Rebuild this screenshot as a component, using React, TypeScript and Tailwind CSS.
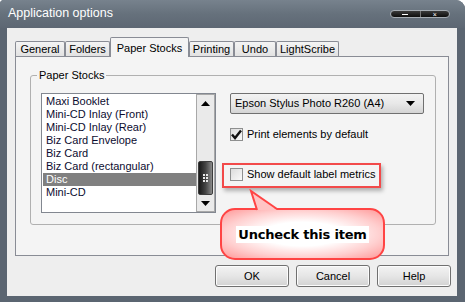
import React from 'react';

const stocks = [
    'Maxi Booklet',
    'Mini-CD Inlay (Front)',
    'Mini-CD Inlay (Rear)',
    'Biz Card Envelope',
    'Biz Card',
    'Biz Card (rectangular)',
    'Disc',
    'Mini-CD',
];

const tabs = [
    { label: 'General', w: 'w-[50px]' },
    { label: 'Folders', w: 'w-[45px]' },
    { label: 'Paper Stocks', w: 'w-[79px]', active: true },
    { label: 'Printing', w: 'w-[45px]' },
    { label: 'Undo', w: 'w-[42px]' },
    { label: 'LightScribe', w: 'w-[63px]' },
];

const Checkbox: React.FC<{ checked?: boolean; label: string }> = ({ checked, label }) => (
    <div className="flex items-center gap-[4px] h-[14px]">
        <div className="w-[13px] h-[13px] border border-[#8e8f8f] bg-gradient-to-br from-[#dcdcdc] to-[#fafafa] flex items-center justify-center">
            {checked && (
                <svg width="11" height="11" viewBox="0 0 11 11">
                    <path d="M1 5.5 L4 9 L10 1.5" fill="none" stroke="#111" strokeWidth="2.4" />
                </svg>
            )}
        </div>
        <span className="text-[11px] text-black">{label}</span>
    </div>
);

const Button: React.FC<{ label: string }> = ({ label }) => (
    <div className="w-[74px] h-[22px] border border-[#707070] rounded-[3px] bg-gradient-to-b from-[#f3f3f3] via-[#e6e6e6] to-[#d2d2d2] flex items-center justify-center text-[11px] text-black shadow-[inset_0_0_0_1px_#fcfcfc]">
        {label}
    </div>
);

const Arrow: React.FC<{ up?: boolean }> = ({ up }) => (
    <svg width="9" height="5" viewBox="0 0 9 5">
        <path d={up ? 'M0 5 L4.5 0 L9 5 Z' : 'M0 0 L9 0 L4.5 5 Z'} fill="#000" />
    </svg>
);

export default function App() {
    return (
        <div className="relative w-[465px] h-[302px] overflow-hidden bg-white font-['Liberation_Sans',Arial,sans-serif]">
            <div className="w-[465px] h-[302px] rounded-tr-[9px] rounded-tl-[4px] bg-[#5b6571] flex flex-col">
                {/* title bar */}
                <div className="h-[28px] flex items-start justify-between rounded-tr-[9px] rounded-tl-[4px] bg-gradient-to-b from-[#77828d] via-[#66717c] to-[#5d6773]">
                    <span className="pl-[8px] pt-[6px] text-[12.5px] text-white leading-[15px]">Application options</span>
                    <div className="mt-[10px] mr-[15px] w-[60px] h-[8px] rounded-full bg-gradient-to-b from-[#3a3a3a] to-[#0e0e0e] border border-[#a6adb4] flex">
                        <div className="flex-1 flex items-center justify-center border-r border-[#777]">
                            <div className="w-[6px] h-px bg-white" />
                        </div>
                        <div className="flex-1 flex items-center justify-center text-white text-[7px] leading-none">×</div>
                    </div>
                </div>

                {/* client */}
                <div className="ml-[7px] w-[450px] h-[268px] bg-[#eeeeee] flex flex-col">
                    <div className="h-[28px] pl-[8px] flex items-end relative z-10">
                        {tabs.map((t) =>
                            t.active ? (
                                <div
                                    key={t.label}
                                    className={`${t.w} h-[20px] -mb-px border border-b-0 border-[#898c95] rounded-t-[2px] bg-[#f4f4f4] flex items-start justify-center pt-[2px] text-[11px] text-black`}
                                >
                                    {t.label}
                                </div>
                            ) : (
                                <div
                                    key={t.label}
                                    className={`${t.w} h-[15px] border border-b-0 border-[#898c95] rounded-t-[2px] bg-gradient-to-b from-[#f4f4f4] to-[#e2e2e2] flex items-center justify-center text-[11px] text-black`}
                                >
                                    {t.label}
                                </div>
                            ),
                        )}
                    </div>

                    {/* tab panel */}
                    <div className="ml-[8px] w-[434px] h-[200px] border border-[#898c95] bg-[#f4f4f4] pl-[14px] pt-[18px]">
                        <div className="relative w-[406px] h-[150px] border border-[#b0b0b0] rounded-[3px] pl-[10px] pt-[17px] flex items-start">
                            <span className="absolute -top-[8px] left-[6px] px-[2px] bg-[#f4f4f4] text-[11px] text-black leading-[14px]">
                                Paper Stocks
                            </span>

                            {/* list box */}
                            <div className="w-[175px] h-[120px] border border-[#828790] bg-white flex">
                                <div className="flex-1 pt-px pl-px">
                                    {stocks.map((s) => (
                                        <div
                                            key={s}
                                            className={`h-[13px] leading-[13px] pl-[3px] text-[11px] ${s === 'Disc' ? 'bg-[#808080] text-white' : 'text-[#0c0c30]'}`}
                                        >
                                            {s}
                                        </div>
                                    ))}
                                </div>
                                <div className="w-[19px] border border-[#a8a8a8] bg-[#eaeaea] flex flex-col">
                                    <div className="h-[17px] flex items-center justify-center">
                                        <Arrow up />
                                    </div>
                                    <div className="flex-1 flex flex-col justify-end">
                                        <div className="h-[34px] mx-px rounded-[2px] border border-[#3c3c3c] bg-gradient-to-r from-[#1a1a1a] via-[#444] to-[#8a8a8a] flex items-center justify-center">
                                            <div className="grid grid-cols-2 gap-[1px]">
                                                {[0, 1, 2, 3, 4, 5].map((i) => (
                                                    <div key={i} className="w-[2px] h-[2px] bg-[#e8e8e8]" />
                                                ))}
                                            </div>
                                        </div>
                                    </div>
                                    <div className="h-[16px] flex items-center justify-center">
                                        <Arrow />
                                    </div>
                                </div>
                            </div>

                            {/* right column */}
                            <div className="ml-[14px] flex flex-col">
                                <div className="w-[194px] h-[21px] border border-[#707070] rounded-[2px] bg-gradient-to-b from-[#f3f3f3] via-[#e8e8e8] to-[#d4d4d4] flex items-center justify-between pl-[4px] pr-[8px] text-[11px] text-black">
                                    <span>Epson Stylus Photo R260 (A4)</span>
                                    <Arrow />
                                </div>
                                <div className="mt-[13px]">
                                    <Checkbox checked label="Print elements by default" />
                                </div>
                                <div className="mt-[26px]">
                                    <Checkbox label="Show default label metrics" />
                                </div>
                            </div>
                        </div>
                    </div>

                    <div className="mt-[9px] pr-[6px] flex justify-end gap-[7px]">
                        <Button label="OK" />
                        <Button label="Cancel" />
                        <Button label="Help" />
                    </div>
                </div>
            </div>

            {/* annotation: highlight box */}
            <div className="absolute left-[222px] top-[163px] w-[159px] h-[25px] border-2 border-[#f24a4a] shadow-[2px_3px_4px_rgba(0,0,0,0.28)]" />

            {/* annotation: callout */}
            <div className="absolute left-[220px] top-[208px] w-[165px] h-[52px] rounded-[15px] border-2 border-[#ff4444] bg-[radial-gradient(ellipse_at_center,#ffffff_35%,#ffd0d0_68%,#ff9898_100%)] flex items-center justify-center">
                <span className="bg-white px-[2px] text-[13px] font-bold text-black leading-[17px] font-['DejaVu_Sans',sans-serif] tracking-[-0.2px]">
                    Uncheck this item
                </span>
            </div>
            <svg className="absolute left-[246px] top-[189px]" width="34" height="22" viewBox="0 0 34 22">
                <path d="M5 2 L11 21 L31 21" fill="#ffc4c4" />
                <path d="M11 21 L5 2 L31 20" fill="none" stroke="#ff4444" strokeWidth="2" />
            </svg>
        </div>
    );
}
